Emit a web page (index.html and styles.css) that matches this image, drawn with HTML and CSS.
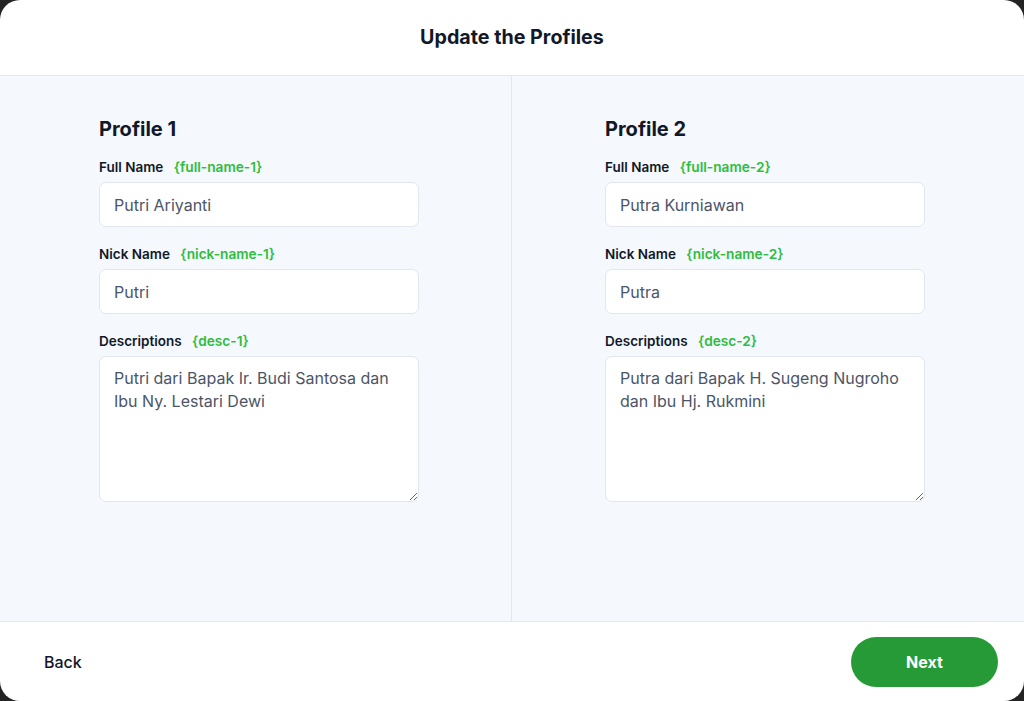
FILE: index.html
```html
<!DOCTYPE html>
<html lang="en">
<head>
<meta charset="utf-8">
<title>Update the Profiles</title>
<link rel="stylesheet" href="styles.css">
</head>
<body>
<div class="modal">
  <header class="modal-header">
    <h1 class="modal-title">Update the Profiles</h1>
  </header>
  <main class="modal-body">
    <section class="profile profile-left">
      <h2 class="profile-title">Profile 1</h2>
      <div class="field">
        <label class="field-label">Full Name <span class="tag">{full-name-1}</span></label>
        <input class="field-input" type="text" value="Putri Ariyanti">
      </div>
      <div class="field">
        <label class="field-label">Nick Name <span class="tag">{nick-name-1}</span></label>
        <input class="field-input" type="text" value="Putri">
      </div>
      <div class="field">
        <label class="field-label">Descriptions <span class="tag">{desc-1}</span></label>
        <textarea class="field-textarea">Putri dari Bapak Ir. Budi Santosa dan Ibu Ny. Lestari Dewi</textarea>
      </div>
    </section>
    <section class="profile profile-right">
      <h2 class="profile-title">Profile 2</h2>
      <div class="field">
        <label class="field-label">Full Name <span class="tag">{full-name-2}</span></label>
        <input class="field-input" type="text" value="Putra Kurniawan">
      </div>
      <div class="field">
        <label class="field-label">Nick Name <span class="tag">{nick-name-2}</span></label>
        <input class="field-input" type="text" value="Putra">
      </div>
      <div class="field">
        <label class="field-label">Descriptions <span class="tag">{desc-2}</span></label>
        <textarea class="field-textarea">Putra dari Bapak H. Sugeng Nugroho dan Ibu Hj. Rukmini</textarea>
      </div>
    </section>
  </main>
  <footer class="modal-footer">
    <button class="btn-back" type="button">Back</button>
    <button class="btn-next" type="button">Next</button>
  </footer>
</div>
</body>
</html>
```

FILE: styles.css
```css
* { box-sizing: border-box; }
html, body { margin: 0; padding: 0; }
body {
  background: #232323;
  font-family: Inter, "Noto Sans", sans-serif;
  color: #111827;
  width: 1024px;
  height: 701px;
  overflow: hidden;
}
.modal {
  width: 1024px;
  height: 701px;
  background: #ffffff;
  border-radius: 20px;
  overflow: hidden;
  display: flex;
  flex-direction: column;
}
.modal-header {
  height: 76px;
  border-bottom: 1px solid #e2e8f0;
  display: flex;
  align-items: center;
  justify-content: center;
  flex: none;
}
.modal-title {
  margin: 0;
  font-size: 19.7px;
  font-weight: 700;
  line-height: 28px;
  color: #111827;
  padding-bottom: 2px;
}
.modal-body {
  flex: 1;
  display: grid;
  grid-template-columns: 512px 512px;
  background: #f5f8fd;
}
.profile {
  padding-top: 39px;
}
.profile-left {
  border-right: 1px solid #e2e8f0;
  padding-left: 99px;
}
.profile-right {
  padding-left: 93px;
}
.profile-title {
  margin: 0 0 14px;
  font-size: 20px;
  line-height: 28px;
  font-weight: 700;
  color: #111827;
}
.field {
  width: 320px;
  margin-bottom: 17px;
}
.field-label {
  display: block;
  font-size: 13.5px;
  line-height: 20px;
  font-weight: 600;
  color: #111827;
  margin-bottom: 5px;
}
.tag {
  color: #2ebd3e;
  font-size: 13.7px;
  margin-left: 7px;
}
.field-input,
.field-textarea {
  display: block;
  width: 320px;
  background: #ffffff;
  border: 1px solid #e1e6ef;
  border-radius: 7px;
  font-family: Inter, "Noto Sans", sans-serif;
  font-size: 16px;
  color: #4b5568;
  padding: 0 14px;
  outline: none;
}
.field-input {
  height: 45px;
}
.field-textarea {
  height: 146px;
  padding-top: 10px;
  line-height: 23px;
  resize: both;
}
.modal-footer {
  height: 80px;
  flex: none;
  border-top: 1px solid #e2e8f0;
  display: flex;
  align-items: center;
  justify-content: space-between;
  padding: 0 26px 0 44px;
}
.btn-back {
  background: none;
  border: none;
  padding: 0;
  font-family: Inter, "Noto Sans", sans-serif;
  font-size: 16px;
  font-weight: 500;
  color: #111827;
}
.btn-next {
  width: 147px;
  height: 50px;
  border: none;
  border-radius: 25px;
  background: #279a38;
  color: #ffffff;
  font-family: Inter, "Noto Sans", sans-serif;
  font-size: 16px;
  font-weight: 700;
}
```
